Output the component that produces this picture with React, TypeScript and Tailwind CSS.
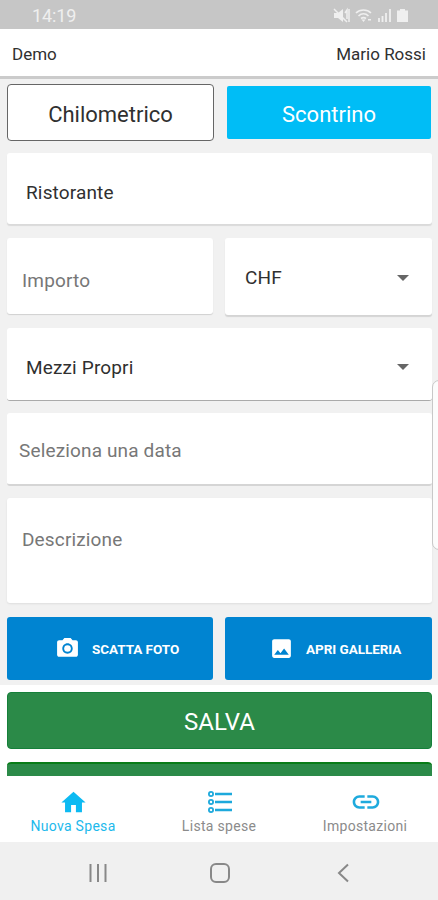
import type { ReactNode } from "react"
import clsx from "clsx"
import { MdCameraAlt, MdHome, MdImage, MdLink } from "react-icons/md"

function StatusBar() {
  return (
    <div className="flex h-[29px] shrink-0 items-center justify-between bg-[#c6c6c6] pl-8 pr-[29px] text-[#efefef]">
      <span className="pt-[3px] text-[18px] leading-none tracking-[-0.1px]">14:19</span>
      <svg width="76" height="18" viewBox="0 0 76 18" fill="none" className="mt-0.5">
        {/* muted speaker */}
        <path d="M1 6h4l5-4v13l-5-4H1z" fill="currentColor" />
        <path d="M1 2l13 13M12 6l2-3v9M16 2v13" stroke="currentColor" strokeWidth="1.5" />
        {/* wifi */}
        <path d="M23 6c4-4 11-4 15 0M25.500 9c3-3 7-3 10 0M28 11.500c2-1.500 3-1.500 5 0" stroke="currentColor" strokeWidth="1.600" />
        <path d="M28.500 12.500h4l-2 2.500zM35 12h3v1.500h-3z" fill="currentColor" />
        {/* signal */}
        <path d="M46 15v-4M49.500 15V9M53 15V6M57 15V2" stroke="currentColor" strokeWidth="1.800" />
        {/* battery */}
        <path d="M67 2h5v1.500h3V15H64V3.500h3z" fill="currentColor" />
      </svg>
    </div>
  )
}

function Field({ children, className, arrow }: { children: ReactNode; className?: string; arrow?: boolean }) {
  return (
    <div className={clsx("flex items-center justify-between rounded-[3px] bg-white text-[19px] tracking-[0.15px]", className)}>
      <span className="leading-none">{children}</span>
      {arrow && (
        <svg width="12" height="6" viewBox="0 0 12 6" className="mr-[23px]">
          <path d="M0 0h12L6 6z" fill="#666" />
        </svg>
      )}
    </div>
  )
}

function ListIcon() {
  return (
    <svg width="24" height="22" viewBox="0 0 24 22" fill="none" stroke="#1da9dc" strokeWidth="1.800">
      <circle cx="3" cy="3" r="2.100" />
      <circle cx="3" cy="11" r="2.100" />
      <circle cx="3" cy="19" r="2.100" />
      <path d="M7 3h17M7 11h17M7 19h17" strokeWidth="2.400" />
    </svg>
  )
}

const tabs = [
  { label: "Nuova Spesa", icon: <MdHome size={29} color="#0dbaf2" />, active: true },
  { label: "Lista spese", icon: <ListIcon />, active: false },
  { label: "Impostazioni", icon: <MdLink size={32} color="#1eaadd" />, active: false },
]

export default function App() {
  return (
    <div className="flex h-[900px] w-[438px] flex-col overflow-hidden bg-white font-['Roboto',sans-serif] text-[#303030]">
      <StatusBar />

      <header className="flex h-[50px] shrink-0 items-center justify-between border-b-[3px] border-[#cbcbcb] bg-white pl-3 pr-3 pt-1 text-[17px]">
        <span>Demo</span>
        <span>Mario Rossi</span>
      </header>

      <main className="relative flex h-[697px] shrink-0 flex-col overflow-hidden">
        <div className="flex h-[606px] shrink-0 flex-col bg-[#f1f1f1] pl-[7px] pr-1.5 pt-[5px]">
          <div className="flex h-[57px] gap-3">
            <button className="w-[207px] rounded-[4px] border border-[#666] bg-white pt-[3px] text-[22px]">Chilometrico</button>
            <button className="my-0.5 ml-[1px] w-[204px] rounded-[2px] bg-[#00bdf6] pt-[3px] text-[22px] text-white">Scontrino</button>
          </div>

          <Field className="mt-3 h-[71px] pl-[19px] pt-[7px] shadow-[0_2px_1px_#dadada]">Ristorante</Field>
          <div className="mt-3.5 flex h-[77px] gap-3">
            <Field className="h-[76px] w-[206px] pl-[15px] pt-[8px] text-[#777] shadow-[0_1px_1px_#d0d0d0]">Importo</Field>
            <Field className="h-[77px] w-[207px] pl-5 pt-0.5 shadow-[0_2px_1px_#d4d4d4]" arrow>CHF</Field>
          </div>
          <Field className="mt-[13px] h-[73px] border-b border-[#aaa] pl-[19px] pt-[6px]" arrow>Mezzi Propri</Field>
          <Field className="mt-3 h-[73px] border-b-2 border-[#d5d5d5] pl-3 pt-[4px] text-[#777]">Seleziona una data</Field>
          <Field className="mt-3 h-[105px] items-start pl-[15px] pt-[32px] text-[#777] shadow-[0_1px_2px_#dedede]">Descrizione</Field>

          <div className="mt-3.5 flex h-[63px] gap-3 text-[13.5px] font-bold tracking-[-0.05px] text-white">
            <button className="flex w-[206px] items-center rounded-[3px] bg-[#0084d1] pl-12">
              <MdCameraAlt size={25} />
              <span className="ml-3 pt-0.5">SCATTA FOTO</span>
            </button>
            <button className="flex w-[207px] items-center rounded-[3px] bg-[#0084d1] pl-11">
              <MdImage size={25} />
              <span className="ml-3 pt-0.5">APRI GALLERIA</span>
            </button>
          </div>
        </div>

        <div className="flex flex-col gap-[13px] bg-white pl-[7px] pr-1.5 pt-[7px]">
          <button className="h-[57px] shrink-0 rounded-[4px] border border-[#15803a] bg-[#2b8a48] pt-0.5 text-[24px] text-white">SALVA</button>
          <div className="h-10 shrink-0 rounded-t-[4px] border-t-2 border-[#087c17] bg-[#2b8a48]" />
        </div>

        {/* edge panel handle */}
        <div className="absolute right-[-10px] top-[301px] h-[170px] w-4 rounded-[7px] border border-[#c8c8c8] bg-[#fcfcfc]" />
      </main>

      <nav className="flex h-[66px] shrink-0 bg-white text-[14px]">
        {tabs.map(tab => (
          <div key={tab.label} className={clsx("flex flex-1 flex-col items-center pt-2.5", tab.active ? "text-[#1db9ec]" : "text-[#8b8b8b]")}>
            <div className="flex h-8 items-center pl-px">{tab.icon}</div>
            <span className="leading-[17px] tracking-[0.3px]">{tab.label}</span>
          </div>
        ))}
      </nav>

      <div className="flex h-[58px] shrink-0 items-center justify-between bg-[#f0f0f0] pl-[89px] pr-[89px] pt-[3px]">
        <svg width="18" height="20" viewBox="0 0 18 20" stroke="#888" strokeWidth="2">
          <path d="M1.500 1v18M9 1v18M16.500 1v18" />
        </svg>
        <svg width="20" height="20" viewBox="0 0 20 20" fill="none" stroke="#888" strokeWidth="2" className="mr-1">
          <rect x="1" y="1" width="18" height="18" rx="5" />
        </svg>
        <svg width="12" height="20" viewBox="0 0 12 20" fill="none" stroke="#888" strokeWidth="2">
          <path d="M11 1.500L2 10l9 8.500" />
        </svg>
      </div>
    </div>
  )
}
